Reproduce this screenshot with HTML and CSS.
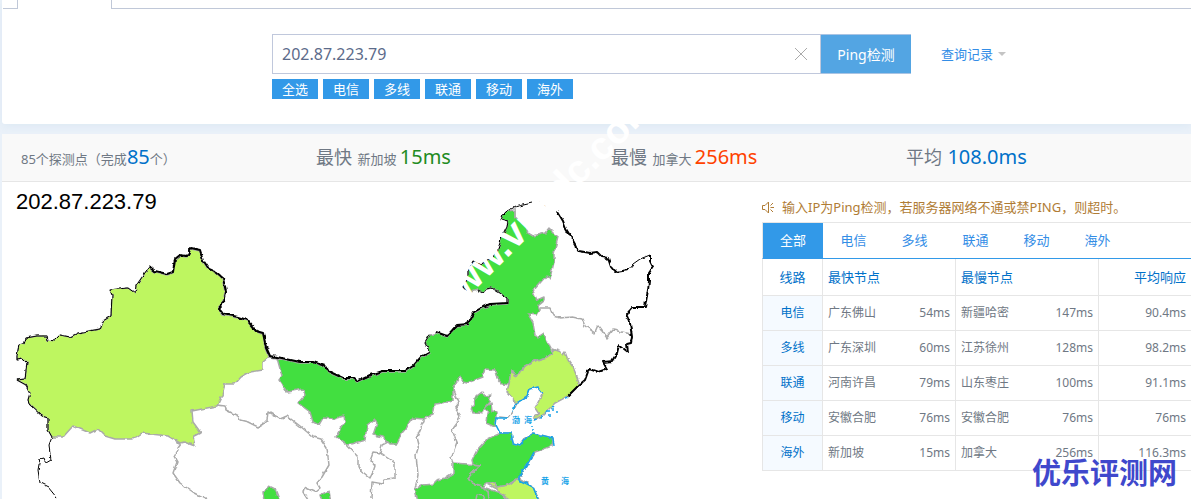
FILE: index.html
```html
<!DOCTYPE html>
<html lang="zh-CN">
<head>
<meta charset="utf-8">
<title>Ping检测</title>
<link rel="stylesheet" href="styles.css">
</head>
<body>
<div class="page">
  <section class="query">
    <div class="tabstrip"><span class="tabstrip-left"></span><span class="tabstrip-active"></span><span class="tabstrip-rest"></span></div>
    <form class="search">
      <div class="search-row">
        <div class="host-field">
          <input class="host" type="text" value="202.87.223.79" aria-label="IP">
          <button class="clear" type="button" aria-label="清空"><svg width="14" height="14" viewBox="0 0 14 14"><path d="M1 1L13 13M13 1L1 13" fill="none" stroke="#aaa" stroke-width="1"/></svg></button>
        </div>
        <button class="submit" type="button">Ping检测</button>
        <a class="history" href="#">查询记录<span class="caret"></span></a>
      </div>
      <div class="chips">
        <button type="button" class="chip">全选</button>
        <button type="button" class="chip">电信</button>
        <button type="button" class="chip">多线</button>
        <button type="button" class="chip">联通</button>
        <button type="button" class="chip">移动</button>
        <button type="button" class="chip">海外</button>
      </div>
    </form>
  </section>

  <section class="result">
    <div class="stats">
      <div class="stat">85个探测点（完成<b class="num blue">85</b>个）</div>
      <div class="stat"><span class="label">最快</span> 新加坡 <b class="num green">15ms</b></div>
      <div class="stat"><span class="label">最慢</span> 加拿大 <b class="num red">256ms</b></div>
      <div class="stat"><span class="label">平均</span> <b class="num blue">108.0ms</b></div>
    </div>
    <div class="panes">
      <div class="map-pane">
        <svg class="map" viewBox="2 182 760 317" preserveAspectRatio="xMinYMin meet" role="img" aria-label="中国地图">
          <defs>
            <filter id="rough" filterUnits="userSpaceOnUse" x="0" y="180" width="762" height="322">
              <feTurbulence type="fractalNoise" baseFrequency="0.16" numOctaves="2" seed="4" result="n"/>
              <feDisplacementMap in="SourceGraphic" in2="n" scale="4" xChannelSelector="R" yChannelSelector="G"/>
            </filter>
          </defs>
          <text class="map-title" x="16" y="209">202.87.223.79</text>
          <g filter="url(#rough)">
            <g class="province">
              <path class="lime" d="M17 360L17 355 19 345 24 344 26 338 37 336 47 336 48 340 54 341 60 335 70 337 78 333 100 329 103 321 111 316 112 295 110 290 128 288 135 293 136 286 149 267 155 272 167 275 173 273 175 260 180 256 187 257 191 249 200 251 202 260 208 269 215 272 222 278 225 292 223 302 218 308 223 315 238 318 247 321 256 332 263 334 265 347 269 357 263 362 263 370 250 372 241 377 235 384 225 384 222 395 217 406 192 411 193 422 201 433 193 437 195 446 184 442 180 443 168 436 142 433 133 439 115 439 105 436 98 429 90 433 73 426 63 437 52 437 48 430 48 418 42 416 30 405 28 400 30 393 26 385 17 380 25 379 27 363 23 359Z"/>
              <path class="green" d="M277 358L300 363 313 363 325 367 328 372 343 379 353 379 357 382 370 376 383 372 405 372 413 367 421 358 430 353 425 343 430 335 436 333 447 337 457 326 468 325 474 313 483 308 490 305 507 304 507 298 500 293 492 288 486 289 483 293 477 290 468 293 463 287 468 278 468 272 473 261 480 265 488 260 492 258 497 252 502 237 507 227 508 222 501 220 503 215 507 211 515 210 515 217 522 222 526 226 528 233 533 236 545 233 549 228 558 237 554 253 554 262 550 279 547 275 533 291 537 300 544 297 544 300 538 305 540 310 537 315 528 314 533 323 535 335 538 338 544 334 550 347 553 353 547 357 537 360 520 370 516 377 511 370 509 385 502 384 497 378 495 370 485 369 483 377 467 383 463 382 460 376 453 387 453 401 435 404 433 415 423 419 413 418 407 427 402 433 397 444 390 444 383 437 373 435 377 423 375 419 367 425 365 440 347 445 336 437 345 422 344 416 333 419 323 418 319 425 313 422 310 412 298 403 305 395 303 389 287 392 279 380 282 376Z"/>
              <path class="green" d="M482 392L485 396 491 395 489 402 485 407 483 413 478 412 473 413 471 407 475 405 474 399 478 395Z"/>
              <path class="green" d="M491 403L492 411 497 412 497 417 495 427 486 423 487 414 489 412 485 407Z"/>
              <path class="green" d="M453 463L480 465 468 478 472 484 483 487 500 493 510 502 418 502 415 489 423 485 433 484 437 480 445 478 453 473Z"/>
              <path class="green" d="M500 433L487 439 477 450 472 460 473 464 480 465 468 478 472 484 483 487 487 483 493 483 497 487 508 485 519 478 528 463 535 452 552 446 553 438 533 433 525 438 520 445 513 443 511 433Z"/>
              <path class="lime" d="M486 483L493 483 497 487 508 485 519 478 533 487 540 502 510 502 508 498 500 493 497 489Z"/>
              <path class="lime" d="M517 403L507 392 509 385 511 370 516 377 520 370 537 360 547 357 553 353 553 349 561 352 563 355 565 352 568 360 573 367 579 382 579 385 568 396 555 403 543 415 534 420 534 417 539 414 535 408 543 393 538 387 530 389 527 397Z"/>
              <path class="green" d="M263 492L269 486 275 489 280 502 264 502Z"/>
              <path class="green" d="M320 495L329 491 331 502 322 502Z"/>
              <path d="M180 443L177 447 178 450 174 457 177 462 173 473 180 483 193 492 207 499"/>
              <path d="M217 405L225 406 226 410 238 416 240 420 248 422 258 427 263 424 267 420 268 412 280 419 287 416 300 426 313 437 321 439 327 448 329 465 322 477 317 483 320 488 315 492 304 487 303 492 308 500"/>
              <path d="M269 357L277 358"/>
              <path d="M347 445L358 457 358 468 370 478 373 472 375 466 370 460 373 452 380 453 395 463 395 478 385 479 383 484 372 482 371 499M380 453L382 445 388 442"/>
              <path d="M425 418L417 437 419 445 416 455 418 475 415 489"/>
              <path d="M453 388L459 403 455 408 460 415 458 422 452 430 457 442 451 458 453 463"/>
              <path d="M500 417L508 418 513 412 517 403M483 487L488 492 489 499M476 499L477 495 483 496 485 500M515 207L515 217"/>
              <path d="M540 308L550 308 553 316 560 318 572 317 582 319 585 326 595 333 598 326 607 338 613 330 622 332 631 334"/>
            </g>
            <g class="frontier">
              <path class="thin" d="M57 498L48 487 40 483 38 470 40 459 44 458 46 463 51 460 49 445 52 437"/>
              <path class="thin" d="M52 437L48 430 48 418 42 416 30 405 28 400 30 393 26 385 17 380 25 379 27 363 23 359 17 360 17 355 19 345 24 344 26 338 37 336 47 336 48 340 54 341 60 335 70 337 78 333 100 329 103 321 111 316 112 295 110 290 128 288 135 293 136 286 149 267"/>
              <path d="M149 266L155 271 167 274 173 272 175 259 180 255 187 256 191 248 200 250 203 260 209 269 216 272 223 278 226 292 224 302 219 308 224 314 238 317 247 320 256 331 263 333 266 347 270 356 277 357 300 362 313 362 325 366 328 371 343 378 353 378 357 381 370 375 383 371 405 371 413 366 421 357 430 352"/>
              <path class="thin" d="M430 353L425 343 430 335"/>
              <path d="M436 332L447 336 457 325 468 324 474 312 483 307 490 304 507 303"/>
              <path class="thin" d="M507 304L507 298 500 293 492 288 486 289 483 293 477 290M468 293L463 287 468 278 468 272 473 261 480 265 488 260 492 258 497 252 502 237 507 227 508 222 501 220 503 215 507 211 515 207 532 203"/>
              <path d="M536 203L545 207M557 211L563 221 566 229 571 237 576 246 579 251 590 253 597 252 602 257 608 258 611 267 615 272 628 270"/>
              <path class="thin" d="M628 270L633 264 640 259 650 255"/>
              <path d="M650 255L650 261 653 267 649 273 649 281 648 290 645 307 632 307 626 314 630 323 632 337 631 343 627 344 628 352 619 345 617 353 612 361 603 362 607 369 598 372 589 369 585 380 579 385 568 396"/>
            </g>
            <g class="coast">
              <path d="M513 412L515 405 527 397 530 389 538 387 543 393"/>
              <path d="M508 418L497 418 496 425 500 433 511 433 513 443 520 445 527 437 533 433 553 438 554 446M534 452L528 463 519 477 519 480 533 487 538 499"/>
              <path d="M568 397L566 400M534 420L541 417 555 404" stroke-dasharray="3 4"/>
              <path d="M548 411h2M552 409h2M556 412h2M531 426h2M532 430h2M549 416h2"/>
            </g>
          </g>
          <g class="sea">
            <text x="512" y="423">渤</text><text x="524" y="423">海</text>
            <text x="541" y="484">黄</text><text x="561" y="484">海</text>
          </g>
        </svg>
      </div>
      <aside class="side">
        <p class="notice">
          <svg width="13" height="13" viewBox="0 0 13 13" fill="none" stroke="#b07c35"><path d="M.5 4.5H3L6.500 1V12L3 8.500H.5ZM8.500 4.500L11 2M8.500 6.500H12M8.500 8.500L11 11"/></svg>
          <span>输入IP为Ping检测，若服务器网络不通或禁PING，则超时。</span>
        </p>
        <nav class="tabs">
          <a href="#" class="tab on">全部</a><a href="#" class="tab">电信</a><a href="#" class="tab">多线</a><a href="#" class="tab">联通</a><a href="#" class="tab">移动</a><a href="#" class="tab">海外</a>
        </nav>
        <table class="nodes">
          <colgroup><col class="c-line"><col class="c-name"><col class="c-fast"><col class="c-name"><col class="c-slow"><col></colgroup>
          <thead><tr><th class="line">线路</th><th colspan="2">最快节点</th><th colspan="2">最慢节点</th><th class="avg">平均响应</th></tr></thead>
          <tbody>
            <tr><th class="line">电信</th><td>广东佛山</td><td class="ms">54ms</td><td>新疆哈密</td><td class="ms">147ms</td><td class="avg">90.4ms</td></tr>
            <tr><th class="line">多线</th><td>广东深圳</td><td class="ms">60ms</td><td>江苏徐州</td><td class="ms">128ms</td><td class="avg">98.2ms</td></tr>
            <tr><th class="line">联通</th><td>河南许昌</td><td class="ms">79ms</td><td>山东枣庄</td><td class="ms">100ms</td><td class="avg">91.1ms</td></tr>
            <tr><th class="line">移动</th><td>安徽合肥</td><td class="ms">76ms</td><td>安徽合肥</td><td class="ms">76ms</td><td class="avg">76ms</td></tr>
            <tr><th class="line">海外</th><td>新加坡</td><td class="ms">15ms</td><td>加拿大</td><td class="ms">256ms</td><td class="avg">116.3ms</td></tr>
          </tbody>
        </table>
      </aside>
    </div>
  </section>
  <span class="stamp">www.vmidc.com</span>
  <span class="brand">优乐评测网</span>
</div>
</body>
</html>
```
FILE: styles.css
```css
* { box-sizing: border-box; }
body {
  margin: 0;
  background: #eaf1f9;
  color: #6f7884;
  font: 13px/20px "Noto Sans", "Noto Sans CJK SC", sans-serif;
}
a { text-decoration: none; }
button { font: inherit; border: 0; padding: 0; cursor: pointer; }
.page { position: relative; padding-left: 2px; overflow: hidden; }

.query {
  height: 124px;
  background: #fff;
  border-bottom-left-radius: 3px;
  box-shadow: 0 2px 10px #dce8f3;
}
.tabstrip { display: flex; height: 9px; padding-left: 1px; }
.tabstrip-left { width: 15px; border-right: 1px solid #c0c8d8; border-bottom: 1px solid #c0c8d8; }
.tabstrip-active { width: 93px; }
.tabstrip-rest { flex: 1; border-left: 1px solid #c0c8d8; border-bottom: 1px solid #c0c8d8; }
.search { padding: 25px 0 0 270px; }
.search-row { display: flex; align-items: center; height: 40px; }
.host-field {
  display: flex;
  align-items: center;
  width: 549px;
  height: 40px;
  padding-right: 12px;
  border: 1px solid #c0c8dc;
}
.host {
  flex: 1;
  min-width: 0;
  padding: 0 0 0 9px;
  border: 0;
  outline: 0;
  color: #5c6b8a;
  font: 16px/24px "Noto Sans", sans-serif;
}
.clear { display: flex; width: 14px; height: 14px; background: none; }
.submit {
  width: 90px;
  height: 40px;
  padding-top: 2px;
  border: 1px solid #a9c4e4;
  border-width: 1px 0;
  background: #53a5e3;
  color: #fff;
  font-size: 14px;
}
.history { display: flex; align-items: center; gap: 5px; margin-left: 30px; color: #338de6; }
.caret { border: 4px solid transparent; border-top-color: #c4c4c4; border-bottom: 0; }
.chips { display: flex; gap: 5px; margin-top: 5px; }
.chip { width: 46px; height: 20px; background: #3299e8; color: #fff; line-height: 20px; }

.result { margin-top: 10px; background: #fff; }
.stats {
  display: grid;
  grid-template-columns: repeat(4, 1fr);
  height: 48px;
  padding-left: 9px;
  border-bottom: 1px solid #e6e6e6;
  background: #f9f9f9;
}
.stat { position: relative; z-index: 2; padding-left: 10px; line-height: 46px; white-space: nowrap; }
.label { margin-right: 2px; font-size: 18px; }
.num { font-size: 20px; font-weight: 400; }
.blue { color: #0071c9; }
.green { color: #228b22; fill: #42df40; }
.red { color: #ff4200; }

.panes { display: flex; }
.map-pane { flex: 1; min-width: 0; }
.map { display: block; width: 100%; height: 317px; }
.map-title { fill: #000; font: 22px "Liberation Sans", Arial, sans-serif; }
.province { stroke: #aaa; stroke-width: 1.5; stroke-linejoin: round; fill: none; }
.lime { fill: #bef661; }
.frontier { fill: none; stroke: #000; stroke-width: 2; stroke-linejoin: round; }
.frontier .thin { stroke-width: 1; }
.coast { fill: none; stroke: #17a3e8; stroke-width: 1.5; }
.sea { fill: #17a3e8; font: bold 8px "Noto Sans CJK SC", sans-serif; }

.side { width: 429px; padding-top: 15px; }
.notice { display: flex; align-items: center; gap: 7px; height: 20px; margin: 0 0 5px; color: #b07c35; white-space: nowrap; }
.tabs { display: flex; height: 37px; border: 1px solid #e6e6e6; border-width: 1px 0 0 1px; border-bottom: 1px solid #3299e8; }
.tab { width: 61px; color: #338de6; line-height: 35px; text-align: center; }
.tab.on { width: 60px; background: #3299e8; color: #fff; }
.nodes { width: 100%; table-layout: fixed; border-collapse: collapse; font-size: 12px; }
.c-line { width: 60px; }
.c-name { width: 70px; }
.c-fast { width: 63px; }
.c-slow { width: 73px; }
.nodes tr { height: 35px; border-bottom: 1px solid #e6e6e6; }
.nodes thead tr { height: 36px; }
.nodes th, .nodes td { padding: 0 5px; text-align: left; font-weight: 400; white-space: nowrap; }
.nodes thead th { color: #0071c9; font-size: 13px; border-right: 1px solid #e6e6e6; }
.nodes .line { padding: 0; border: 1px solid #e6e6e6; border-top: 0; color: #0071c9; text-align: center; }
.nodes tbody .line { background: #f5faff; }
.nodes .ms { border-right: 1px solid #e6e6e6; text-align: right; }
.nodes .avg { border-right: 0; text-align: right; }

.stamp {
  position: absolute;
  z-index: 1;
  left: 448px;
  top: 287px;
  color: #fff;
  font: bold 39px/40px "Liberation Sans", Arial, sans-serif;
  white-space: nowrap;
  transform: rotate(-45deg);
  transform-origin: 0 100%;
  pointer-events: none;
}
.brand {
  position: absolute;
  z-index: 1;
  right: 14px;
  bottom: 8px;
  color: #3f48cc;
  font: bold 29px/40px "Noto Sans CJK SC", sans-serif;
  pointer-events: none;
}
```
